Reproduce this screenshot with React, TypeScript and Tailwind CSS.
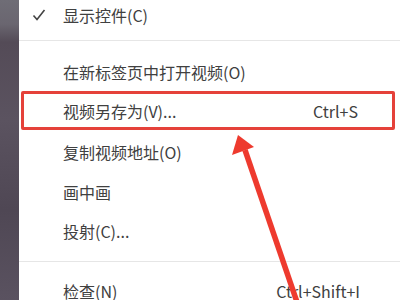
import React from "react";

const font = { fontFamily: '"Noto Sans CJK SC", "Noto Sans", sans-serif' };

function Row({ label, shortcut, h, check }: { label: string; shortcut?: string; h: string; check?: boolean }) {
  return (
    <div className={`relative shrink-0 flex items-center ${h} pl-[44px] pr-[40px] text-[16px] text-[#404040]`}>
      {check && (
        <svg width="14" height="14" viewBox="0 0 14 14" className="absolute left-[13px] top-[13px]">
          <path d="M1.5 7.5 L5 11.5 L12.5 2" fill="none" stroke="#444" strokeWidth="1.6" />
        </svg>
      )}
      <span className="flex-1">{label}</span>
      {shortcut && <span>{shortcut}</span>}
    </div>
  );
}

function Sep({ h, top }: { h: string; top: string }) {
  return (
    <div className={`shrink-0 ${h} ${top}`}>
      <div className="h-px bg-[#e6e6e6]" />
    </div>
  );
}

export default function App() {
  return (
    <div className="relative w-[400px] h-[300px] overflow-hidden flex bg-white" style={font}>
      <div className="w-[19px] h-full bg-[linear-gradient(180deg,#6f6d76_0%,#6a6670_8%,#544b57_14%,#5b5360_40%,#4f4754_70%,#5a5260_100%)]" />
      <div className="flex-1 flex flex-col -mt-[5px]">
        <Row label="显示控件(C)" h="h-[40px]" check />
        <Sep h="h-[17px]" top="pt-[5px]" />
        <Row label="在新标签页中打开视频(O)" h="h-[39px]" />
        <div className="shrink-0 ml-[2px] mr-[5px] h-[39px] border-[3px] border-[#e5413a] rounded-[2px] flex items-center pl-[39px] pr-[34px] text-[16px] text-[#404040]">
          <span className="flex-1">视频另存为(V)...</span>
          <span>Ctrl+S</span>
        </div>
        <Row label="复制视频地址(O)" h="h-[43px]" />
        <Row label="画中画" h="h-[38px]" />
        <Row label="投射(C)..." h="h-[40px]" />
        <Sep h="h-[20px]" top="pt-[10px]" />
        <Row label="检查(N)" shortcut="Ctrl+Shift+I" h="h-[40px]" />
      </div>
      <svg className="absolute left-0 top-0" width="400" height="300" viewBox="0 0 400 300">
        <line x1="245" y1="150" x2="298" y2="305" stroke="#ee3a2e" strokeWidth="5.5" />
        <polygon points="238,135 232,155 254,147" fill="#ee3a2e" />
      </svg>
    </div>
  );
}
